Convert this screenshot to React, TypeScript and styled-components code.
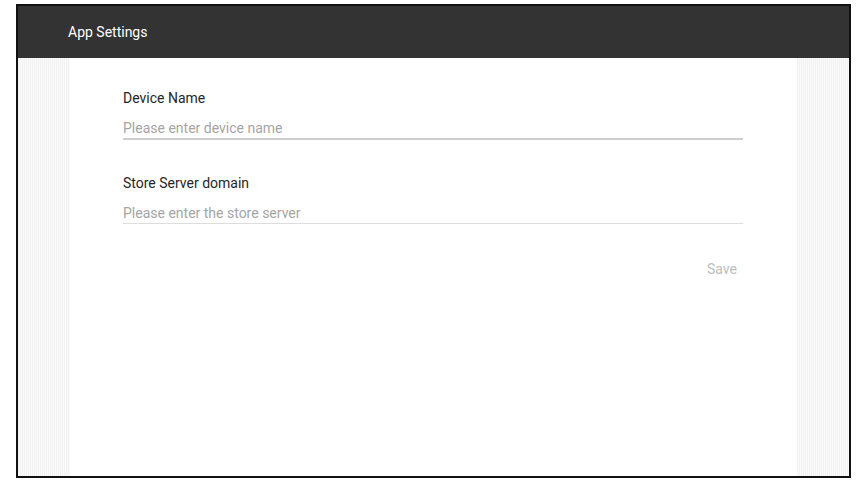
import styled, { createGlobalStyle } from "styled-components";

const GlobalStyle = createGlobalStyle`
  html, body {
    margin: 0;
    padding: 0;
    background: #ffffff;
    font-family: Roboto, "Liberation Sans", sans-serif;
  }
`;

const Frame = styled.div`
  margin: 4px 0 0 16px;
  width: 831px;
  height: 470px;
  border: 2px solid #111111;
  display: flex;
  flex-direction: column;
  overflow: hidden;
`;

const AppBar = styled.header`
  height: 52px;
  flex: none;
  background: #333333;
  display: flex;
  align-items: center;
  padding-left: 50px;
  color: #ffffff;
  font-size: 14px;
  line-height: 20px;
`;

const Body = styled.div`
  flex: 1;
  display: grid;
  grid-template-columns: 52px 1fr 52px;
`;

const Stripe = styled.div`
  background: repeating-linear-gradient(
    90deg,
    #f3f3f3 0px,
    #f3f3f3 1px,
    #f9f9f9 1px,
    #f9f9f9 2px
  );
`;

const Panel = styled.main`
  background: #ffffff;
  padding: 30px 54px 0 53px;
  display: flex;
  flex-direction: column;
`;

const Field = styled.div<{ $last?: boolean }>`
  display: flex;
  flex-direction: column;
  gap: 10px;
  margin-bottom: ${(p) => (p.$last ? "35px" : "33px")};
`;

const Label = styled.label`
  font-size: 14px;
  line-height: 20px;
  color: #262626;
`;

const Input = styled.input<{ $strong?: boolean }>`
  font-family: Roboto, "Liberation Sans", sans-serif;
  font-size: 14px;
  line-height: 20px;
  height: 20px;
  padding: 0;
  border: none;
  border-bottom: ${(p) => (p.$strong ? "2px solid #cdcdcd" : "1px solid #dddddd")};
  outline: none;
  color: #222222;
  background: transparent;
  &::placeholder {
    color: #a5a5a5;
  }
`;

const Actions = styled.div`
  display: flex;
  justify-content: flex-end;
`;

const SaveButton = styled.button`
  font-family: Roboto, "Liberation Sans", sans-serif;
  font-size: 14px;
  line-height: 20px;
  color: #bdbdbd;
  background: none;
  border: none;
  padding: 0 6px 0 0;
  cursor: default;
`;

export default function App() {
  return (
    <>
      <GlobalStyle />
      <Frame>
        <AppBar>App Settings</AppBar>
        <Body>
          <Stripe />
          <Panel>
            <Field>
              <Label>Device Name</Label>
              <Input $strong placeholder="Please enter device name" />
            </Field>
            <Field $last>
              <Label>Store Server domain</Label>
              <Input placeholder="Please enter the store server" />
            </Field>
            <Actions>
              <SaveButton disabled>Save</SaveButton>
            </Actions>
          </Panel>
          <Stripe />
        </Body>
      </Frame>
    </>
  );
}
